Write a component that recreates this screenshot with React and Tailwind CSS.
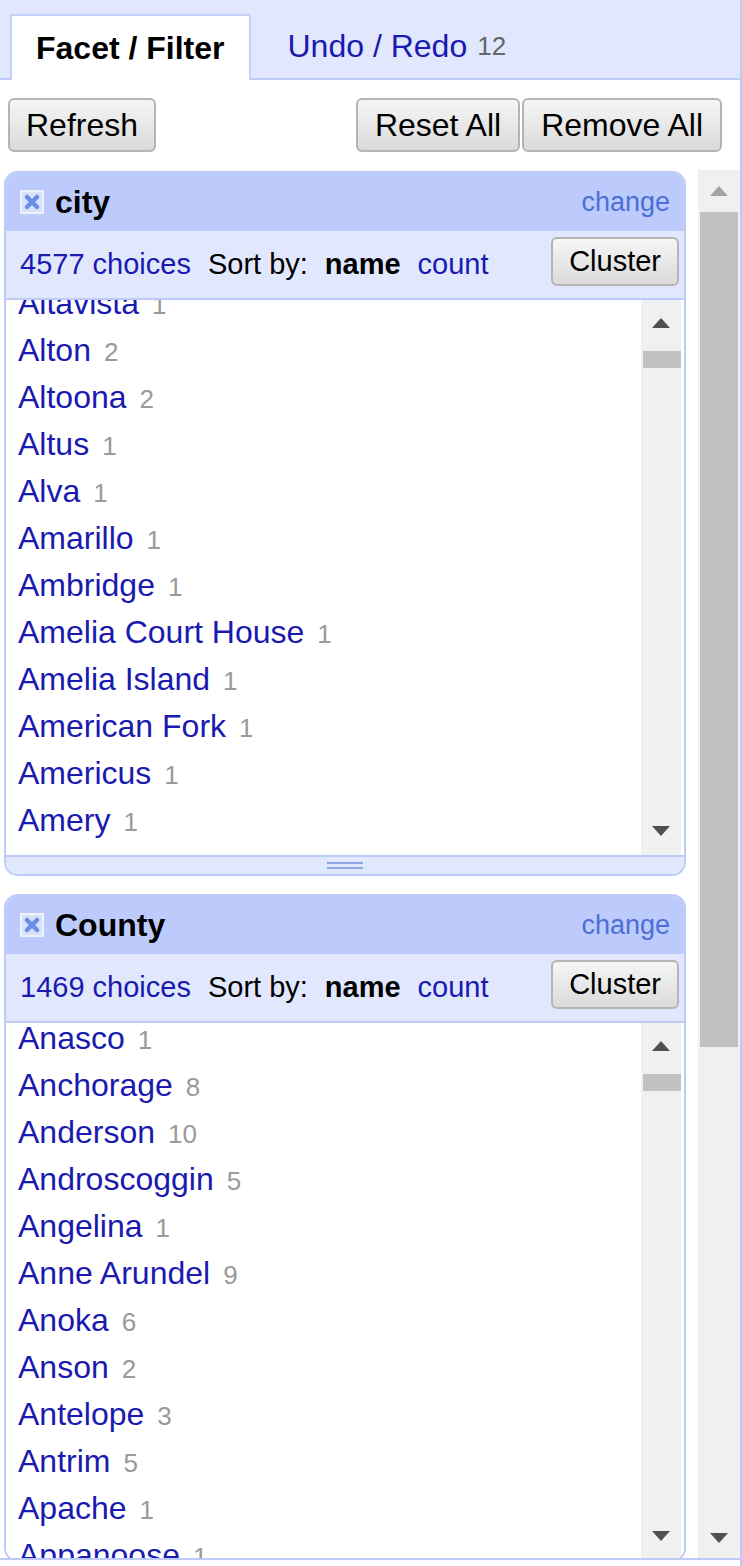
import React from "react";

const cityItems = [
  ["Altavista", 1],
  ["Alton", 2],
  ["Altoona", 2],
  ["Altus", 1],
  ["Alva", 1],
  ["Amarillo", 1],
  ["Ambridge", 1],
  ["Amelia Court House", 1],
  ["Amelia Island", 1],
  ["American Fork", 1],
  ["Americus", 1],
  ["Amery", 1],
];

const countyItems = [
  ["Anasco", 1],
  ["Anchorage", 8],
  ["Anderson", 10],
  ["Androscoggin", 5],
  ["Angelina", 1],
  ["Anne Arundel", 9],
  ["Anoka", 6],
  ["Anson", 2],
  ["Antelope", 3],
  ["Antrim", 5],
  ["Apache", 1],
  ["Appanoose", 1],
];

const btn =
  "h-[54px] rounded-[6px] border-2 border-[#b5b5b5] bg-linear-to-b from-[#f6f6f6] to-[#dadada] text-[32px] leading-none text-black";

const Arrow = ({ up, color = "#505050" }) => (
  <svg width="18" height="10" viewBox="0 0 18 10">
    <polygon points={up ? "9,0 18,10 0,10" : "0,0 18,0 9,10"} fill={color} />
  </svg>
);

const CloseIcon = () => (
  <svg width="24" height="24" viewBox="0 0 24 24">
    <rect x="1" y="1" width="22" height="22" fill="#d8e1fc" stroke="#eef2ff" strokeWidth="2" />
    <path d="M7 7 L17 17 M17 7 L7 17" stroke="#6a8ee6" strokeWidth="4.5" strokeLinecap="round" />
  </svg>
);

// ตัว facet หนึ่งกล่อง
const Facet = ({ title, choices, items, offset, bodyHeight, footer }) => {
  return (
    <div className="border-2 border-[#bccbf8] rounded-t-[14px] rounded-b-[14px] overflow-hidden shrink-0">
      {/* title */}
      <div className="h-[58px] bg-[#bccbfb] flex items-center pl-[14px] pr-[14px]">
        <CloseIcon />
        <span className="ml-[11px] text-[32px] font-bold text-black">{title}</span>
        <span className="ml-auto text-[27px] text-[#4a6fd6]">change</span>
      </div>

      {/* sort bar */}
      <div className="h-[69px] bg-[#e1e8fd] border-b-2 border-[#bccbf8] flex items-center pl-[14px] pr-[5px] text-[29px]">
        <span className="text-[#1a1ab0]">{choices} choices</span>
        <span className="ml-[17px] text-black">Sort by:</span>
        <span className="ml-[17px] font-bold text-black">name</span>
        <span className="ml-[17px] text-[#1a1ab0]">count</span>
        <button className="ml-auto mb-[6px] h-[49px] px-[16px] rounded-[6px] border-2 border-[#b5b5b5] bg-linear-to-b from-[#f6f6f6] to-[#dadada] text-[29px] leading-none text-black">
          Cluster
        </button>
      </div>

      {/* list */}
      <div className="flex bg-white" style={{ height: bodyHeight }}>
        <div className="flex-1 overflow-hidden pl-[12px]">
          <div style={{ marginTop: offset }}>
            {items.map(([name, count]) => (
              <div key={name} className="h-[47px] leading-[47px] whitespace-nowrap">
                <span className="text-[32px] text-[#1a1ab0]">{name}</span>
                <span className="ml-[13px] text-[26px] text-[#9a9a9a]">{count}</span>
              </div>
            ))}
          </div>
        </div>
        <div className="w-[40px] mr-[3px] bg-[#f0f0f0] flex flex-col items-center">
          <div className="h-[46px] flex items-center">
            <Arrow up />
          </div>
          <div className="mt-[5px] h-[17px] w-[38px] ml-[2px] bg-[#c1c1c1]" />
          <div className="mt-auto h-[48px] flex items-center">
            <Arrow />
          </div>
        </div>
      </div>

      {footer && (
        <div className="h-[19px] bg-[#e1e8fd] border-t-2 border-[#bccbf8] flex flex-col items-center justify-center gap-[3px]">
          <div className="w-[36px] h-[2px] bg-[#8fa7e2]" />
          <div className="w-[36px] h-[2px] bg-[#8fa7e2]" />
        </div>
      )}
    </div>
  );
};

const App = () => {
  return (
    <div className="w-[742px] h-[1566px] overflow-hidden bg-white font-['Liberation_Sans',Arial,sans-serif] flex flex-col">
      {/* tabs */}
      <div className="h-[80px] shrink-0 bg-[#e1e8fd] border-b-2 border-[#bccbf8] border-r-2 flex items-end pl-[10px]">
        <div className="h-[66px] -mb-[2px] bg-white border-2 border-b-0 border-[#c3d0f9] px-[24px] flex items-center text-[32px] font-bold text-black">
          Facet / Filter
        </div>
        <div className="h-[64px] ml-[13px] px-[24px] flex items-center text-[32px] text-[#1a1ab0]">
          Undo / Redo
          <span className="ml-[10px] text-[26px] text-[#666]">12</span>
        </div>
      </div>

      <div className="flex-1 border-r-2 border-[#bccbf8] flex flex-col">
        {/* buttons */}
        <div className="mt-[18px] h-[54px] shrink-0 flex pl-[8px] pr-[18px]">
          <button className={btn + " px-[16px]"}>Refresh</button>
          <div className="ml-auto flex gap-[2px]">
            <button className={btn + " px-[17px]"}>Reset All</button>
            <button className={btn + " px-[17px]"}>Remove All</button>
          </div>
        </div>

        {/* facets + scrollbar */}
        <div className="mt-[18px] h-[1390px] shrink-0 flex border-b-2 border-[#bccbf8]">
          <div className="ml-[4px] w-[682px] overflow-hidden flex flex-col gap-[18px] pt-[1px]">
            <Facet title="city" choices="4577" items={cityItems} offset={-20} bodyHeight={555} footer />
            <Facet title="County" choices="1469" items={countyItems} offset={-8} bodyHeight={537} />
          </div>
          <div className="ml-[12px] w-[42px] bg-[#f0f0f0] flex flex-col items-center">
            <div className="h-[42px] flex items-center">
              <Arrow up color="#a3a3a3" />
            </div>
            <div className="w-[38px] h-[835px] bg-[#c1c1c1]" />
            <div className="mt-auto h-[40px] flex items-center">
              <Arrow />
            </div>
          </div>
        </div>
      </div>
    </div>
  );
};

export default App;
